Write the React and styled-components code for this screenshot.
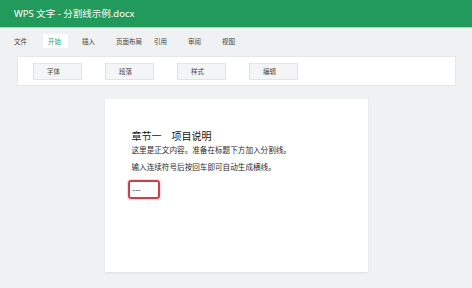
import React from 'react';
import styled, { createGlobalStyle } from 'styled-components';

const GlobalStyle = createGlobalStyle`
	html, body {
		margin: 0;
		padding: 0;
		background: #f0f1f3;
		font-family: "Noto Sans", "Noto Sans CJK SC", sans-serif;
	}
`;

const Shell = styled.div`
	width: 472px;
	height: 288px;
	overflow: hidden;
	background: #f0f1f3;
`;

const TitleBar = styled.header`
	height: 27px;
	background: #229a5c;
	border-bottom: 1px solid #9fd9b9;
	display: flex;
	align-items: center;
	padding-left: 14px;
`;

const Title = styled.span`
	color: #ffffff;
	font-size: 9.5px;
	line-height: 12px;
	font-weight: 400;
`;

const Tabs = styled.nav`
	display: flex;
	padding: 6px 0 0 9px;
	height: 14px;
`;

const TabSlot = styled.div`
	flex: 0 0 34px;
	display: flex;
`;

const Tab = styled.span`
	display: flex;
	align-items: center;
	height: 14px;
	padding: 0 7px 0 5px;
	font-size: 6.5px;
	white-space: nowrap;
	color: ${(p) => (p.active ? '#2ea46a' : '#444')};
	background: ${(p) => (p.active ? '#ffffff' : 'transparent')};
	border-radius: 1px;
`;

const Ribbon = styled.div`
	margin: 8px 16px 0 17px;
	height: 28px;
	background: #ffffff;
	border: 1px solid #e5e7ea;
	display: flex;
	align-items: center;
	gap: 23px;
	padding: 0 15px;
`;

const RibbonButton = styled.div`
	width: 49px;
	height: 17px;
	box-sizing: border-box;
	background: #f4f5f7;
	border: 1px solid #e1e3e6;
	display: flex;
	align-items: center;
	padding-left: 13px;
	font-size: 6.5px;
	color: #444;
`;

const Page = styled.div`
	width: 263px;
	height: 173px;
	margin: 13px auto 0;
	background: #ffffff;
	box-shadow: 0 1px 2px rgba(0, 0, 0, 0.08);
	box-sizing: border-box;
	padding: 31px 27px 0;
`;

const Heading = styled.h1`
	margin: 0;
	font-size: 10px;
	line-height: 12px;
	font-weight: 400;
	color: #141414;
`;

const Para = styled.p`
	margin: ${(p) => p.gap || 0}px 0 0;
	font-size: 7.6px;
	line-height: 10px;
	color: #2a2a2a;
`;

const Marker = styled.div`
	margin: 8px 0 0 -4px;
	width: 32px;
	height: 19px;
	box-sizing: border-box;
	border: 2px solid #c8424b;
	border-radius: 3px;
	box-shadow: 0 0 1px 1px rgba(200, 66, 75, 0.2);
	display: flex;
	align-items: center;
	padding-left: 3px;
	font-family: "Liberation Sans", sans-serif;
	font-size: 8px;
	color: #111;
`;

const tabs = ['文件', '开始', '插入', '页面布局', '引用', '审阅', '视图'];
const groups = ['字体', '段落', '样式', '编辑'];

const App = () => {
	return (
		<Shell>
			<GlobalStyle />
			<TitleBar>
				<Title>WPS 文字 - 分割线示例.docx</Title>
			</TitleBar>
			<Tabs>
				{tabs.map((t) => (
					<TabSlot key={t}>
						<Tab active={t === '开始'}>{t}</Tab>
					</TabSlot>
				))}
			</Tabs>
			<Ribbon>
				{groups.map((g) => (
					<RibbonButton key={g}>{g}</RibbonButton>
				))}
			</Ribbon>
			<Page>
				<Heading>章节一　项目说明</Heading>
				<Para gap={3}>这里是正文内容。准备在标题下方加入分割线。</Para>
				<Para gap={7}>输入连续符号后按回车即可自动生成横线。</Para>
				<Marker>---</Marker>
			</Page>
		</Shell>
	);
};

export default App;
